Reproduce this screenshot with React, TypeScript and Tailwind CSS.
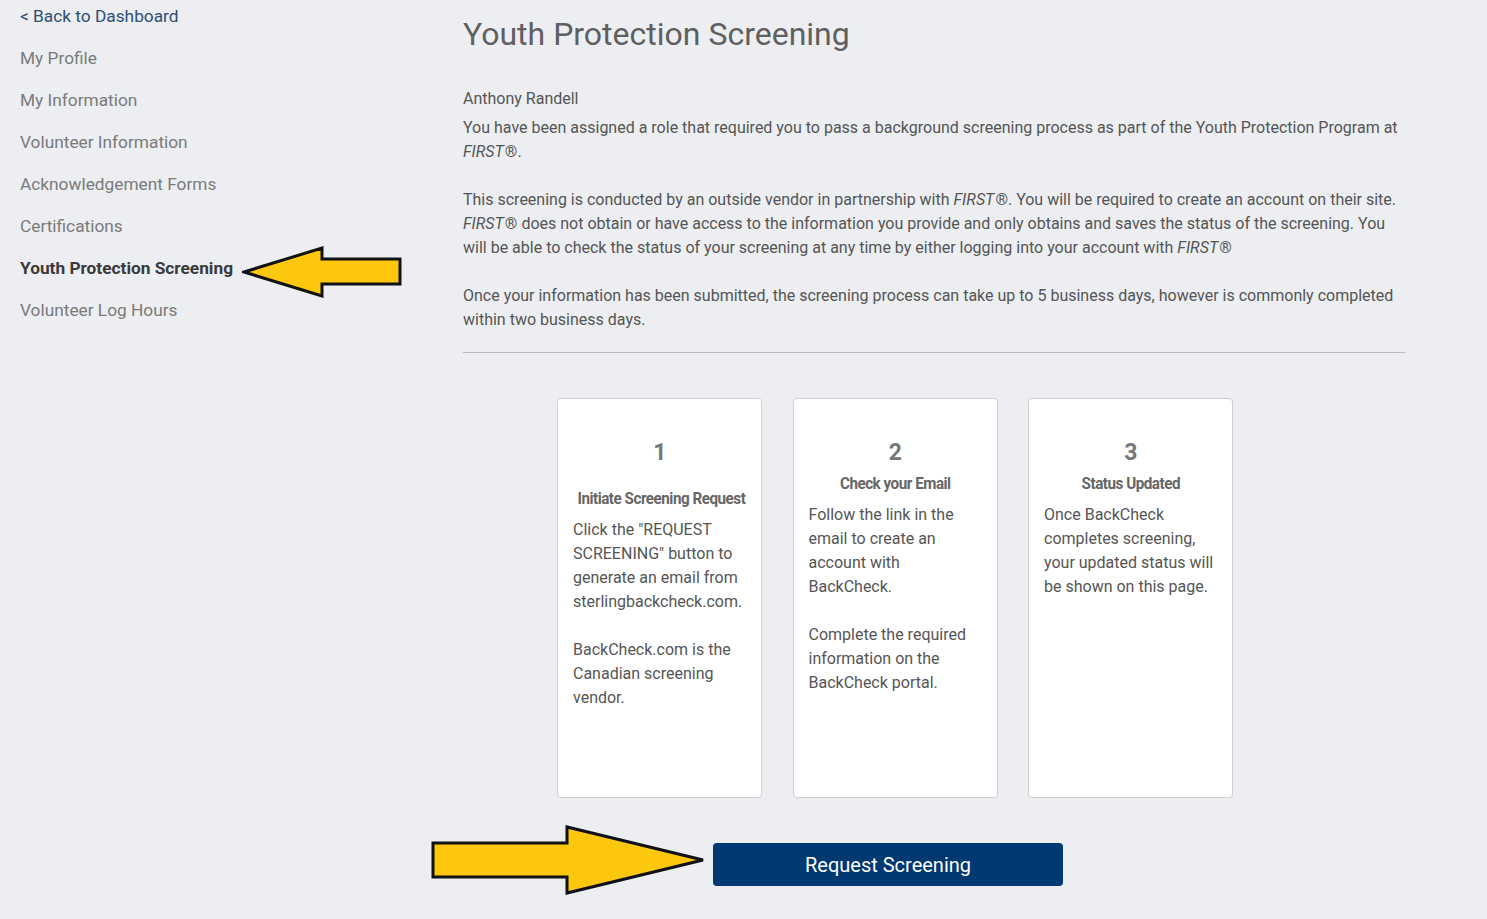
const navItems = [
  "My Profile",
  "My Information",
  "Volunteer Information",
  "Acknowledgement Forms",
  "Certifications",
  "Youth Protection Screening",
  "Volunteer Log Hours",
];

const steps = [
  {
    num: "1",
    title: "Initiate Screening Request",
    extra: true,
    body: [
      'Click the "REQUEST SCREENING" button to generate an email from sterlingbackcheck.com.',
      "BackCheck.com is the Canadian screening vendor.",
    ],
  },
  {
    num: "2",
    title: "Check your Email",
    extra: false,
    body: [
      "Follow the link in the email to create an account with BackCheck.",
      "Complete the required information on the BackCheck portal.",
    ],
  },
  {
    num: "3",
    title: "Status Updated",
    extra: false,
    body: ["Once BackCheck completes screening, your updated status will be shown on this page."],
  },
];

const First = () => <i className="pr-[1px]">FIRST</i>;

const LeftArrow = () => (
  <svg className="absolute left-[242px] top-[246px]" width="162" height="52" viewBox="0 0 162 52">
    <polygon
      points="2,26 80,2 80,13 158,13 158,38 80,38 80,50"
      fill="#fdc70d"
      stroke="#111"
      strokeWidth="3"
      strokeLinejoin="miter"
    />
  </svg>
);

const RightArrow = () => (
  <svg className="absolute left-[431px] top-[824px]" width="276" height="72" viewBox="0 0 276 72">
    <polygon
      points="2,19 136,19 136,3 272,36 136,69 136,53 2,53"
      fill="#fdc70d"
      stroke="#111"
      strokeWidth="3"
    />
  </svg>
);

export default function App() {
  return (
    <div className="relative min-h-[919px] w-full bg-[#eceef2] font-['Roboto',sans-serif]">
      <div className="flex">
        <nav className="w-[463px] shrink-0 pl-5 pt-[4px]">
          <a className="block h-[24px] text-[17.3px] leading-[24px] text-[#2f4f76]">&lt; Back to Dashboard</a>
          <ul className="mt-[18px] flex flex-col gap-[18px]">
            {navItems.map((item) => (
              <li
                key={item}
                className={
                  item === "Youth Protection Screening"
                    ? "h-[24px] text-[17.3px] leading-[24px] font-bold text-[#3a3a3a]"
                    : "h-[24px] text-[17.3px] leading-[24px] text-[#7a7a7a]"
                }
              >
                {item}
              </li>
            ))}
          </ul>
        </nav>

        <main className="w-[942px] shrink-0">
          <h1 className="mt-[14px] text-[32px] leading-[40px] text-[#5f5f5f]">Youth Protection Screening</h1>
          <div className="mt-[33px] text-[16px] leading-[24px] text-[#555]">
            <p>Anthony Randell</p>
            <p className="mt-[5px]">
              You have been assigned a role that required you to pass a background screening process as part of the
              Youth Protection Program at <First />®.
            </p>
            <p className="mt-[24px]">
              This screening is conducted by an outside vendor in partnership with <First />®. You will be required to
              create an account on their site. <First />® does not obtain or have access to the information you provide
              and only obtains and saves the status of the screening. You will be able to check the status of your
              screening at any time by either logging into your account with <First />®
            </p>
            <p className="mt-[24px]">
              Once your information has been submitted, the screening process can take up to 5 business days, however
              is commonly completed within two business days.
            </p>
          </div>
          <hr className="mt-[20px] border-t border-[#bdbdbd]" />

          <div className="ml-[94px] mt-[45px] flex gap-[30.5px]">
            {steps.map((s) => (
              <div
                key={s.num}
                className="flex h-[400px] w-[205px] flex-col rounded-[4px] border border-[#cfcfcf] bg-white px-[15px] pt-[40px]"
              >
                <div className="text-center text-[23px] font-bold leading-[28px] tracking-[-0.5px] text-[#777]">
                  {s.num}
                </div>
                <div
                  className={
                    s.extra
                      ? "mt-[20px] whitespace-nowrap text-center text-[16px] font-bold leading-[24px] tracking-[-0.5px] text-[#666]"
                      : "mt-[5px] whitespace-nowrap text-center text-[16px] font-bold leading-[24px] tracking-[-0.5px] text-[#666]"
                  }
                >
                  <span className="inline-block origin-center scale-x-[0.95]">{s.title}</span>
                </div>
                <div className="mt-[7px] text-[16px] leading-[24px] text-[#555]">
                  {s.body.map((b, i) => (
                    <p key={i} className={i > 0 ? "mt-[24px]" : ""}>
                      {b}
                    </p>
                  ))}
                </div>
              </div>
            ))}
          </div>

          <div className="mt-[45px] flex">
            <button className="ml-[250px] h-[43px] w-[350px] rounded-[4px] bg-[#003872] text-[20px] text-white">
              Request Screening
            </button>
          </div>
        </main>
      </div>

      <LeftArrow />
      <RightArrow />
    </div>
  );
}
